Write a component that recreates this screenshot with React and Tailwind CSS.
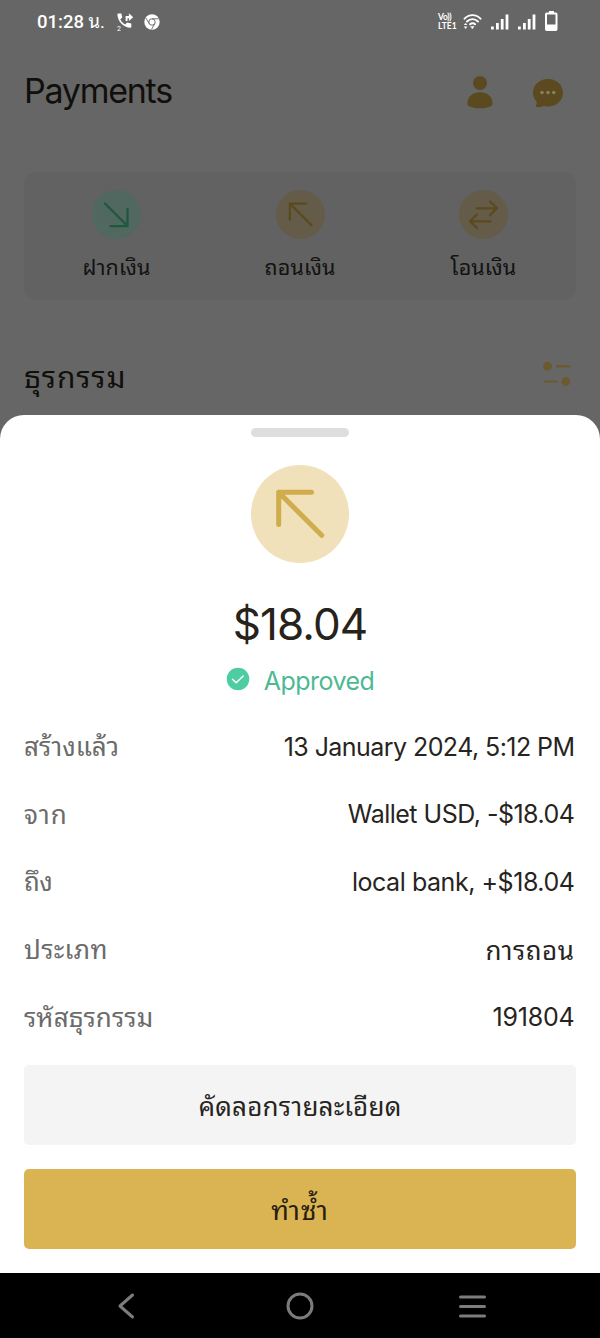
import React from 'react';

const details = [
  { label: 'สร้างแล้ว', value: '13 January 2024, 5:12 PM', labelClass: '', valueClass: 'text-[25px] tracking-[-0.56px]' },
  { label: 'จาก', value: 'Wallet USD, -$18.04', labelClass: 'tracking-[1px]', valueClass: 'text-[25px] tracking-[-0.5px]' },
  { label: 'ถึง', value: 'local bank, +$18.04', labelClass: 'tracking-[-0.5px]', valueClass: 'text-[25px] tracking-[-0.45px]' },
  { label: 'ประเภท', value: 'การถอน', labelClass: 'tracking-[0.4px]', valueClass: 'text-[26px] tracking-[0.5px]' },
  { label: 'รหัสธุรกรรม', value: '191804', labelClass: 'tracking-[0.1px]', valueClass: 'text-[25px] tracking-[-0.2px]' },
];

const CallForwardIcon = () => (
  <div className="flex items-end">
    <span className="-mr-[4px] -mb-[3px] text-[7px] leading-[8px]">2</span>
    <svg width="17" height="17" viewBox="1 0 17 17" fill="#fff">
      <path d="M2.200.5h3.200l.9 4-2 1.700c1 2.400 2.700 4.200 4.900 5.200l1.800-1.900 4.300.9v3.600c0 .5-.3.800-.8.800C7.400 14.800 1.400 8.200 1.400 1.300c0-.5.3-.8.8-.8z" />
      <path d="M9.600 8V3h3.300V.2l4.300 4-4.300 3.800V5.200h-1.400V8z" />
    </svg>
  </div>
);

const ChromeIcon = () => (
  <svg width="16" height="16" viewBox="0 0 16 16" fill="none">
    <circle cx="8" cy="8" r="7.700" fill="#fff" />
    <circle cx="8" cy="8" r="3.200" stroke="#666" strokeWidth="0.9" />
    <path d="M8 4.800h6.800M5.200 9.600 1.900 4M10.800 9.600 7.500 15.400" stroke="#666" strokeWidth="0.9" />
  </svg>
);

const WifiIcon = () => (
  <svg width="19" height="16" viewBox="0 0 19 16" fill="none" stroke="#fff" strokeLinecap="round">
    <path d="M1.500 4.700C6-.1 13-.1 17.500 4.700" strokeWidth="1.900" />
    <path d="M4 7.500c3.200-3.200 7.800-3.200 11 0" strokeWidth="1.900" />
    <path d="M7 10.200c1.700-1.300 3.600-1.300 5.200 0" strokeWidth="1.900" />
    <path d="M8 12.500h3L9.500 14.600z" fill="#fff" strokeWidth="0.600" />
    <path d="M.8 11h3.600L2.600 9zM.8 12.500h3.600L2.600 15z" fill="#fff" stroke="none" />
  </svg>
);

const SignalIcon = () => (
  <svg width="18" height="16" viewBox="0 0 18 16" fill="#fff">
    <rect x="0" y="12.500" width="2.800" height="3" />
    <rect x="5" y="9" width="2.800" height="6.500" />
    <rect x="9.800" y="5" width="2.800" height="10.500" />
    <rect x="14.600" y="0.500" width="2.800" height="15" />
  </svg>
);

const BatteryIcon = () => (
  <svg width="13" height="20" viewBox="0 0 13 20" fill="none">
    <rect x="4" y="0" width="5" height="3" fill="#fff" />
    <rect x="1" y="2.500" width="10.500" height="16.500" rx="0.800" stroke="#fff" strokeWidth="2" />
    <rect x="1" y="13.500" width="10.500" height="5" fill="#fff" />
  </svg>
);

const StatusBar = () => (
  <div className="flex h-11 items-center pl-[37px] pr-[42px] text-white">
    <span className="w-[80px] whitespace-nowrap text-[18.500px] font-medium leading-none">
      01:28 <span className="font-normal">น.</span>
    </span>
    <CallForwardIcon />
    <div className="ml-[10px]">
      <ChromeIcon />
    </div>
    <div className="ml-auto flex items-center">
      <div className="mr-[5px] flex w-[20px] flex-col font-[Lato,sans-serif] text-[8.500px] font-bold leading-[9px]">
        <span className="tracking-[-0.3px]">Vo))</span>
        <span>LTE1</span>
      </div>
      <WifiIcon />
      <div className="ml-[9px]"><SignalIcon /></div>
      <div className="ml-[9px]"><SignalIcon /></div>
      <div className="-mt-[2px] ml-[9px]"><BatteryIcon /></div>
    </div>
  </div>
);

const WithdrawArrow = ({ className, stroke, strokeWidth }) => (
  <svg className={className} viewBox="0 0 98 98" fill="none" stroke={stroke} strokeWidth={strokeWidth} strokeLinecap="round" strokeLinejoin="round">
    <path d="M27.700 59.500V27.300h32.800M27.700 27.300l43 43" />
  </svg>
);

const ActionItem = ({ label, circleClass, children }) => (
  <div className="flex w-[183.500px] flex-col items-center">
    <div className={`h-[49px] w-[49px] rounded-full ${circleClass}`}>{children}</div>
    <span className="mt-[13.500px] whitespace-nowrap text-[21.500px] leading-[32px] tracking-[0.1px] text-[#131211]">{label}</span>
  </div>
);

const App = () => {
  return (
    <div className="flex h-[1338px] w-[600px] flex-col overflow-hidden bg-[#666] font-[Roboto,'Noto_Sans_Thai_Looped','Noto_Looped_Thai',Loma,Waree,Garuda,sans-serif]">
      <StatusBar />

      <header className="flex h-[96px] items-center justify-between pl-[24px] pr-9">
        <h1 className="-mt-[1px] font-[Inter,sans-serif] text-[34px] leading-none tracking-[-1.25px] text-[#100f0c]">Payments</h1>
        <div className="flex items-center gap-[38px]">
          <svg width="28" height="34" viewBox="0 0 28 34" fill="#5b4a20">
            <circle cx="14" cy="8" r="7" />
            <path d="M1.400 28.500C1.400 22 6.500 17.200 14 17.200s12.600 4.800 12.600 11.300c0 1-.5 1.800-1.400 2.400-2.500 1.500-6.700 2.300-11.200 2.300s-8.700-.8-11.200-2.300c-.9-.6-1.400-1.400-1.400-2.400z" />
          </svg>
          <svg width="32" height="30" viewBox="0 0 32 30" className="mt-[3px]">
            <path d="M16 1C7.500 1 1 7 1 14.800c0 3.500 1.400 6.200 3.400 8.700.7 1.200.3 2.500-.4 3.400-.6.900-.3 2 .8 2.100 3.300.3 5.500-.1 7.300-1.300 1.300.5 2.600.8 3.900.8 8.500 0 15-6 15-13.700S24.500 1 16 1z" fill="#5b4a20" />
            <g fill="#8b8061">
              <circle cx="10" cy="14.500" r="1.700" />
              <circle cx="16" cy="14.500" r="1.700" />
              <circle cx="21.800" cy="14.500" r="1.700" />
            </g>
          </svg>
        </div>
      </header>

      <section className="mx-6 mt-[32px] flex h-[128px] justify-center rounded-xl bg-[#626262] pt-[18px]">
        <ActionItem label="ฝากเงิน" circleClass="bg-[#506860]">
          <svg width="49" height="49" viewBox="0 0 49 49" fill="none" stroke="#20573f" strokeWidth="2.300" strokeLinecap="round" strokeLinejoin="round">
            <path d="M13 13.500 35.500 36M35.500 19v17.200H18.500" />
          </svg>
        </ActionItem>
        <ActionItem label="ถอนเงิน" circleClass="bg-[#645c49]">
          <WithdrawArrow className="h-[49px] w-[49px]" stroke="#5b4a20" strokeWidth="4.600" />
        </ActionItem>
        <ActionItem label="โอนเงิน" circleClass="bg-[#645c49]">
          <svg width="49" height="49" viewBox="0 0 49 49" fill="none" stroke="#5b4a20" strokeWidth="2.300" strokeLinecap="round" strokeLinejoin="round">
            <path d="M17.500 18.300h20.500M31 11.500l7 6.800-7 6.800M31.500 31.300H11M18 24.500l-7 6.800 7 6.800" />
          </svg>
        </ActionItem>
      </section>

      <div className="flex h-[115.500px] shrink-0 items-center justify-between pl-[24px] pr-[29px] pt-[40px]">
        <h2 className="mt-[2px] text-[30px] leading-none tracking-[0.9px] text-[#100f0c]">ธุรกรรม</h2>
        <svg width="29" height="26" viewBox="0 0 29 26" className="-mt-[7px]" fill="#6c5a2e">
          <circle cx="5.500" cy="5.200" r="4.400" />
          <rect x="14" y="4.200" width="14.500" height="2.200" rx="1" />
          <rect x="1.500" y="19.400" width="14.500" height="2.200" rx="1" />
          <circle cx="23.800" cy="20.500" r="4.400" />
        </svg>
      </div>

      <section className="flex h-[858px] shrink-0 flex-col rounded-t-3xl bg-white px-6">
        <div className="mt-[12.500px] h-[9px] w-[98px] shrink-0 self-center rounded-full bg-[#dedede]" />
        <div className="mt-[28px] h-[98px] w-[98px] shrink-0 self-center rounded-full bg-[#f0e1ba]">
          <WithdrawArrow className="h-[98px] w-[98px]" stroke="#d0ac4d" strokeWidth="5" />
        </div>

        <p className="mt-[29.500px] self-center font-[Inter,sans-serif] text-[44px] leading-[64px] tracking-[-0.9px] text-[#27221a]">$18.04</p>
        <div className="flex h-[46px] items-center self-center">
          <svg width="24" height="24" viewBox="0 0 24 24" fill="none" className="-mt-[1px]">
            <circle cx="12" cy="12" r="11.300" fill="#4ecda2" />
            <path d="m6.500 12.300 3.700 3.500 7-6.800" stroke="#fff" strokeWidth="1.500" strokeLinecap="round" strokeLinejoin="round" />
          </svg>
          <span className="ml-[14px] mt-[5px] font-[Inter,sans-serif] text-[25px] tracking-[-0.55px] text-[#4db993]">Approved</span>
        </div>

        <dl className="mt-[11.500px] flex flex-col">
          {details.map((item) => (
            <div key={item.value} className="flex h-[67.700px] items-center justify-between whitespace-nowrap pr-[1.500px]">
              <dt className={`text-[26px] text-[#6b6b6b] ${item.labelClass}`}>{item.label}</dt>
              <dd className={`font-[Inter,'Noto_Sans_Thai_Looped','Noto_Looped_Thai',Loma,Waree,Garuda,sans-serif] text-[#27241e] ${item.valueClass}`}>{item.value}</dd>
            </div>
          ))}
        </dl>

        <button type="button" className="mt-[12.700px] h-[80px] shrink-0 rounded-[5px] bg-[#f4f4f4] pt-[5px] text-[26px] tracking-[0.2px] text-[#27241e]">
          คัดลอกรายละเอียด
        </button>
        <button type="button" className="mt-[24.500px] h-[80px] shrink-0 rounded-[5px] bg-[#dab453] pt-[4px] text-[27px] tracking-[1px] text-[#27200f]">
          ทำซ้ำ
        </button>
      </section>

      <nav className="flex h-[65px] shrink-0 items-center bg-black">
        <svg width="600" height="65" viewBox="0 0 600 65" fill="none" stroke="#7c7c7c" strokeWidth="3" strokeLinecap="round" strokeLinejoin="round">
          <path d="M132.500 22 120 33l12.500 11" />
          <circle cx="300" cy="33" r="12" />
          <path d="M460.500 24h24M460.500 33.500h24M460.500 43h24" />
        </svg>
      </nav>
    </div>
  );
};

export default App;
